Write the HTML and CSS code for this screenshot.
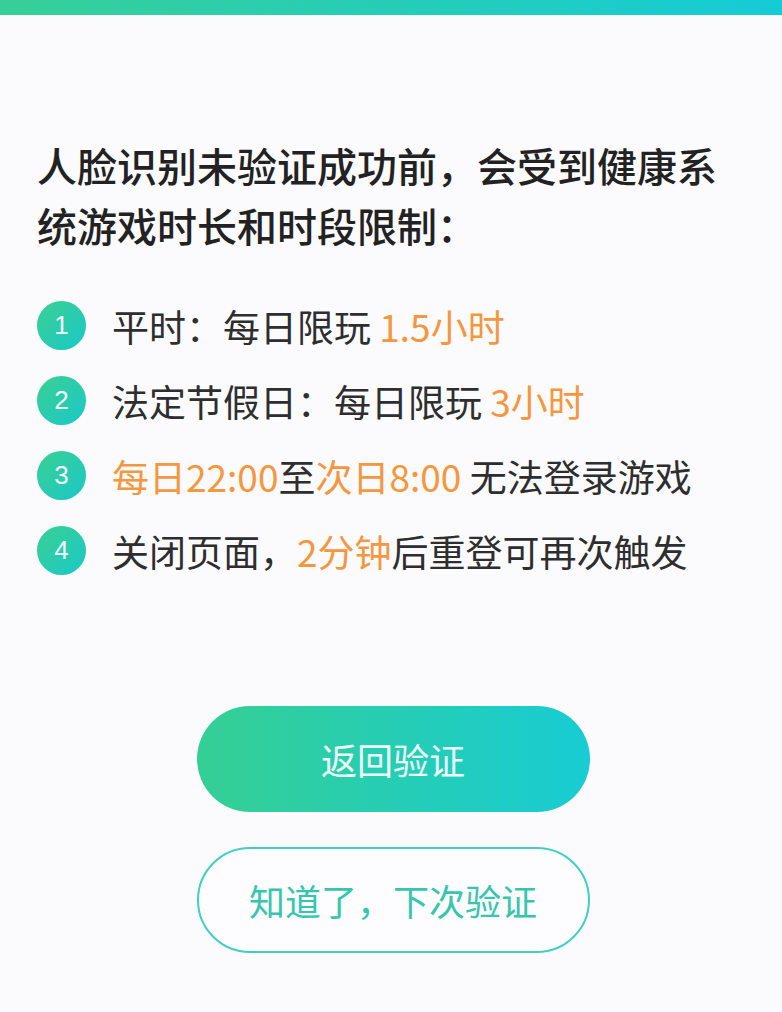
FILE: index.html
```html
<!DOCTYPE html>
<html lang="zh-CN">
<head>
    <meta charset="UTF-8">
    <meta name="viewport" content="width=device-width, initial-scale=1.0">
    <title>健康系统提示</title>
    <link rel="stylesheet" href="styles.css">
</head>
<body>
    <div class="top-bar"></div>
    <div class="notice">
        <h1 class="notice-title">人脸识别未验证成功前，会受到健康系统游戏时长和时段限制：</h1>
        <ul class="rule-list">
            <li class="rule-item">
                <span class="rule-num">1</span>
                <span class="rule-text">平时：每日限玩 <em>1.5小时</em></span>
            </li>
            <li class="rule-item">
                <span class="rule-num">2</span>
                <span class="rule-text">法定节假日：每日限玩 <em>3小时</em></span>
            </li>
            <li class="rule-item">
                <span class="rule-num">3</span>
                <span class="rule-text"><em>每日22:00</em>至<em>次日8:00</em> 无法登录游戏</span>
            </li>
            <li class="rule-item">
                <span class="rule-num">4</span>
                <span class="rule-text">关闭页面，<em>2分钟</em>后重登可再次触发</span>
            </li>
        </ul>
        <div class="actions">
            <button class="btn btn-primary">返回验证</button>
            <button class="btn btn-outline">知道了，下次验证</button>
        </div>
    </div>
</body>
</html>
```

FILE: styles.css
```css
body {
    margin: 0;
    padding: 0;
    background-color: #fbfafd;
    font-family: "Noto Sans CJK SC", "Noto Sans", sans-serif;
    color: #2b2b2b;
}

.top-bar {
    height: 15px;
    background: linear-gradient(90deg, #37cf98, #14ccd6);
}

.notice {
    padding: 0 20px 0 37px;
}

.notice-title {
    width: 700px;
    margin: 120px 0 0 0;
    font-size: 40px;
    line-height: 60px;
    font-weight: 500;
    color: #222222;
}

.rule-list {
    list-style: none;
    margin: 33px 0 0 0;
    padding: 0;
}

.rule-item {
    display: flex;
    align-items: center;
    height: 75px;
}

.rule-num {
    flex: 0 0 49px;
    height: 49px;
    margin-right: 26px;
    border-radius: 50%;
    background: linear-gradient(135deg, #3bd092, #19c8c9);
    color: #f4fffc;
    font-family: "Liberation Sans", Arial, sans-serif;
    font-size: 26px;
    display: flex;
    align-items: center;
    justify-content: center;
}

.rule-text {
    font-size: 37px;
    color: #2e2e2e;
    white-space: nowrap;
}

.rule-text em {
    font-style: normal;
    color: #f5973f;
}

.actions {
    display: flex;
    flex-direction: column;
    align-items: center;
    gap: 35px;
    margin-top: 118px;
    padding-right: 13px;
}

.btn {
    width: 393px;
    height: 106px;
    border-radius: 53px;
    font-family: "Noto Sans CJK SC", sans-serif;
    font-size: 36px;
    cursor: pointer;
}

.btn-primary {
    border: none;
    background: linear-gradient(90deg, #35cf94, #17ccd3);
    color: #eefffa;
}

.btn-outline {
    border: 2px solid #40d0c2;
    background-color: #fdfcfe;
    color: #36c5ad;
}
```
